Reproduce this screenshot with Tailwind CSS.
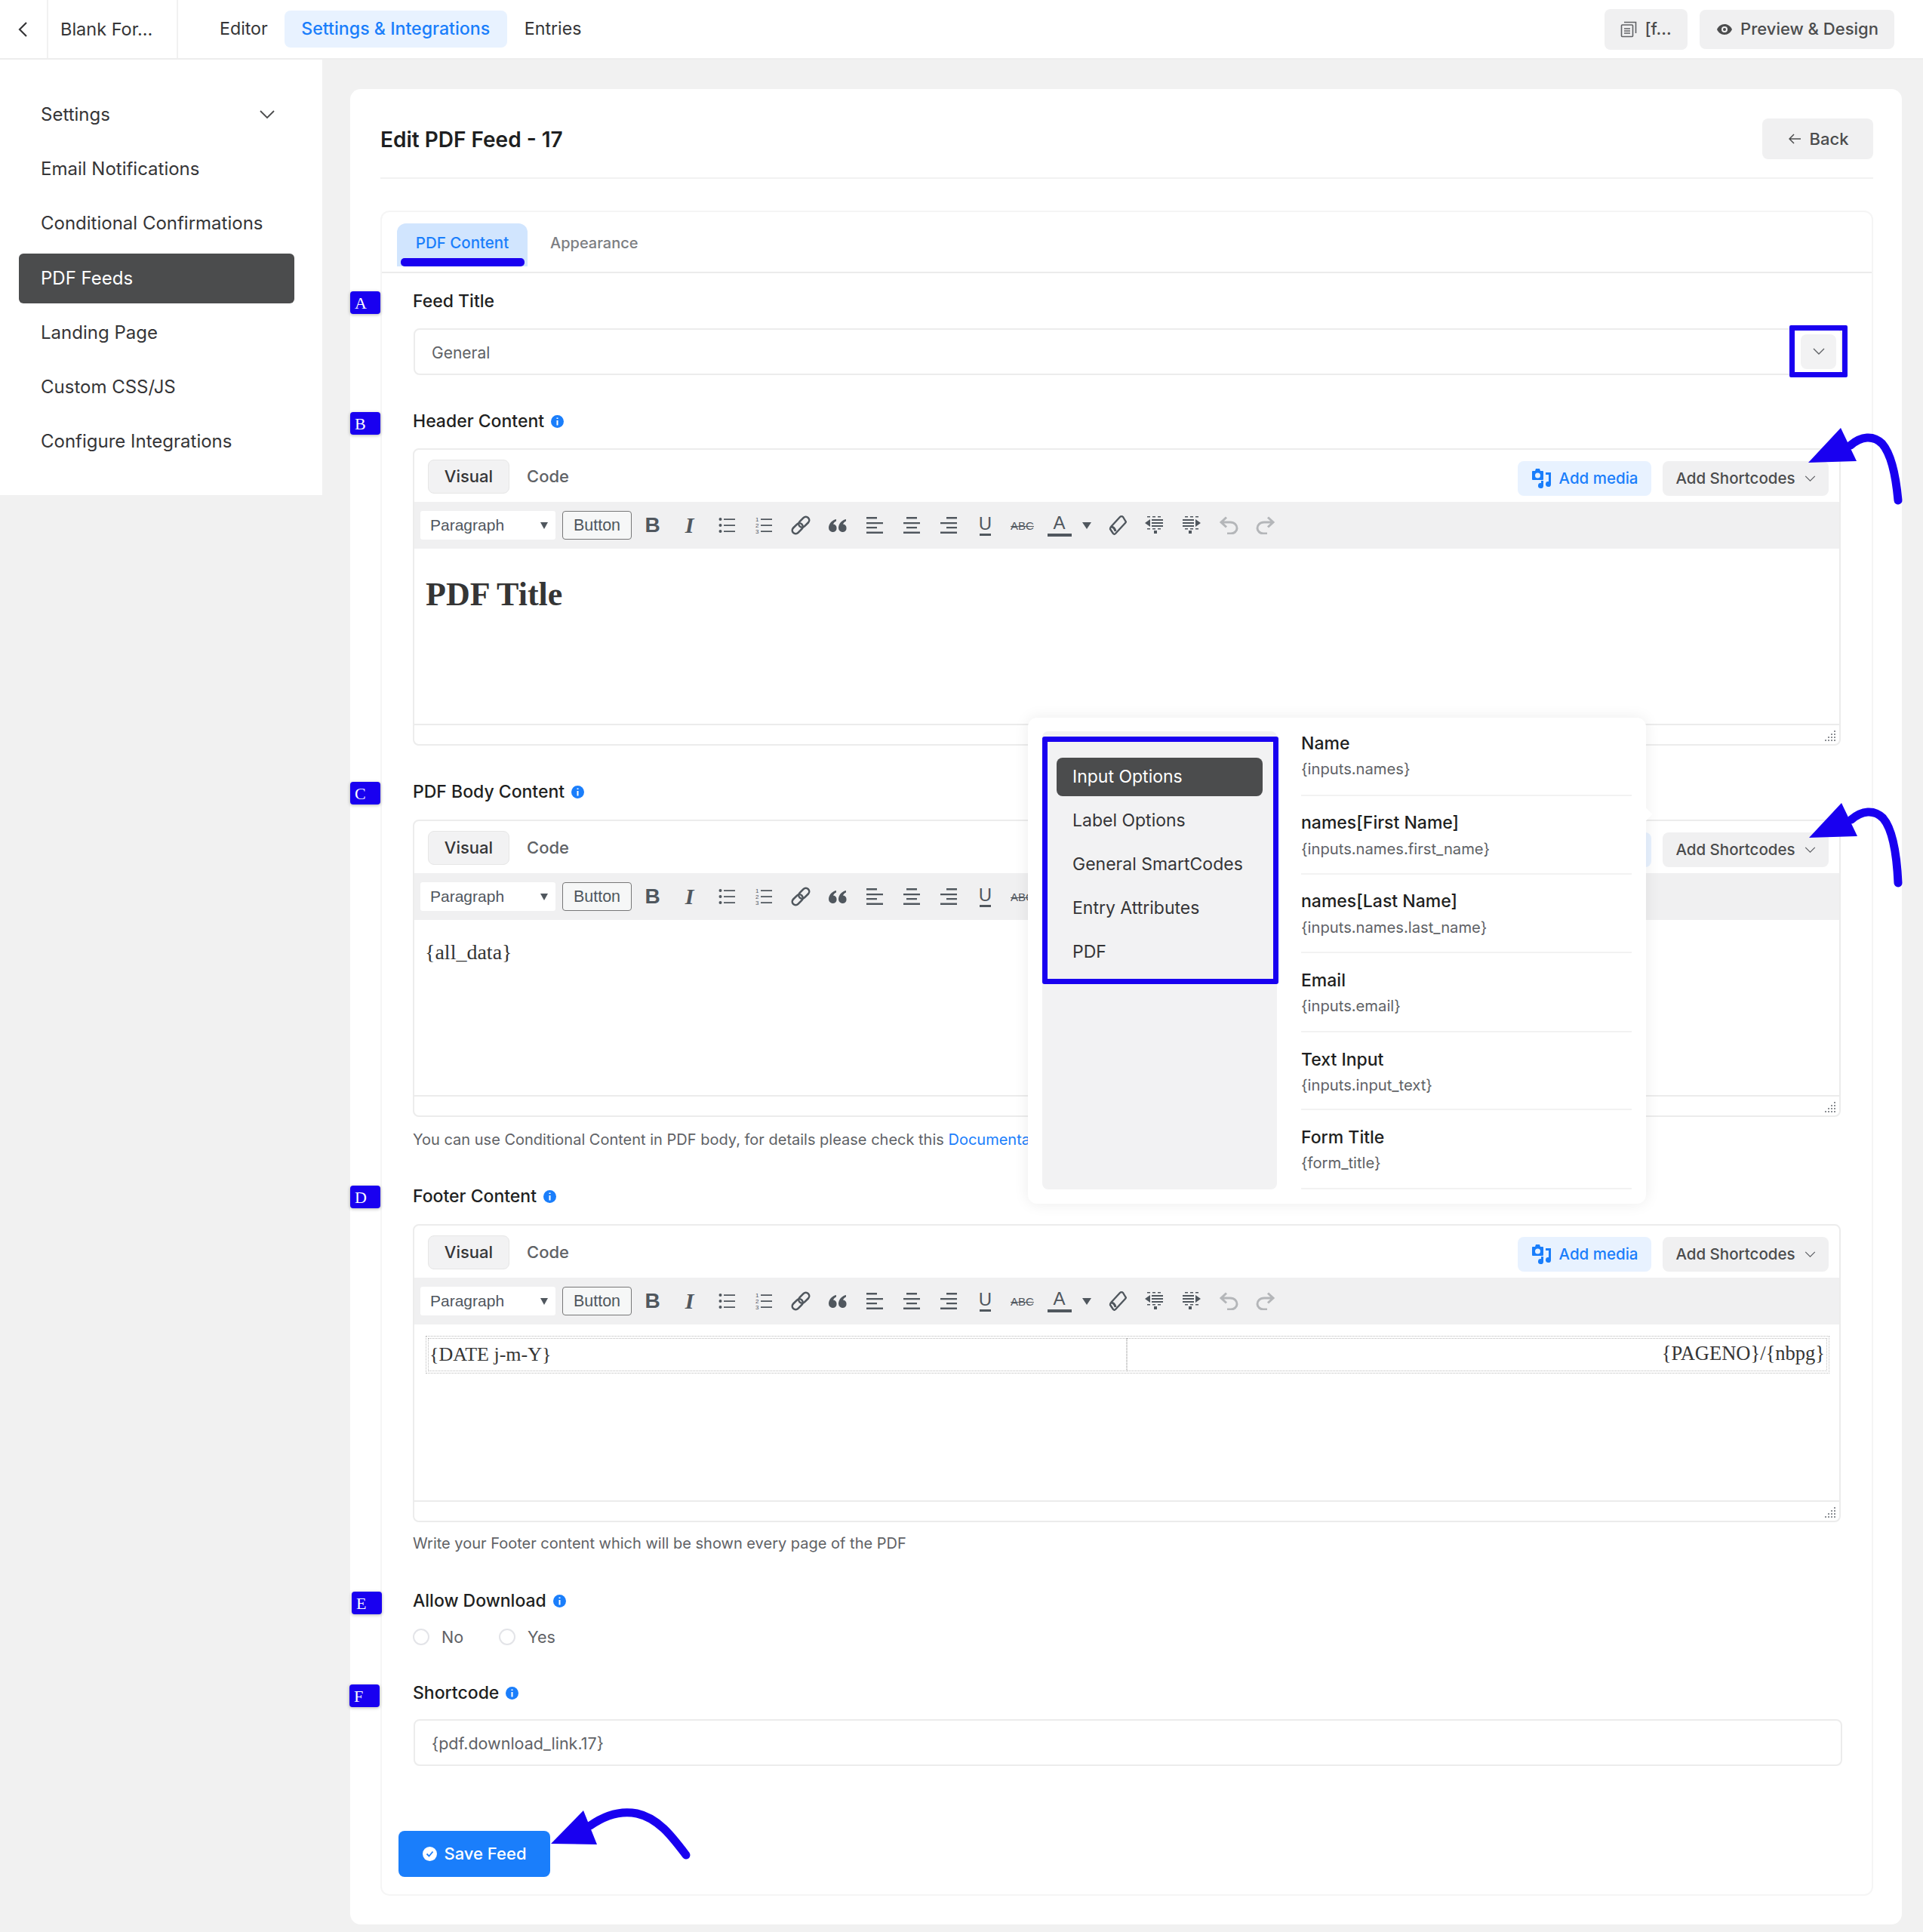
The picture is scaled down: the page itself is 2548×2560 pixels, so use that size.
<!DOCTYPE html>
<html lang="en">
<head>
    <meta charset="UTF-8">
    <title>Edit PDF Feed</title>
    <script src="https://cdn.jsdelivr.net/npm/@tailwindcss/browser@4"></script>
</head>
<body class="bg-[#f1f1f1] font-[Inter,sans-serif] text-[#1e1f21]">
<div class="relative w-[2548px] h-[2560px] overflow-hidden">

    <!-- top bar -->
    <header class="h-[79px] bg-white border-b-2 border-[#ededed] flex items-center text-[23.2px] text-[#353537]">
        <div class="w-[64px] h-full border-r-2 border-[#f1f1f1] flex items-center justify-center">
            <svg class="w-[24px] h-[24px]" viewBox="0 0 24 24" fill="none" stroke="#353537" stroke-width="2.2"><path d="M16 3 7 12l9 9"/></svg>
        </div>
        <div class="w-[172px] h-full border-r-2 border-[#f1f1f1] flex items-center pl-[16px] text-[23.5px]">Blank For...</div>
        <nav class="flex items-center ml-[2px]">
            <a class="pl-[53px] pr-[22px]">Editor</a>
            <a class="w-[295px] h-[49px] rounded-lg bg-[#e8f2ff] text-[#1a7efb] font-medium flex items-center justify-center">Settings &amp; Integrations</a>
            <a class="pl-[23px]">Entries</a>
        </nav>
        <div class="ml-auto mr-[38px] flex items-center gap-[16px] text-[22px] text-[#4b4c4d] font-medium">
            <button class="w-[110px] h-[54px] rounded-lg bg-[#f0f0f1] flex items-center justify-center gap-[10px]">
                <svg class="w-[22px] h-[22px]" viewBox="0 0 22 22" fill="none" stroke="#606266" stroke-width="1.6"><rect x="1.5" y="5" width="15" height="15.5" rx="1"/><path d="M5 1.5h15.5V16M5 10h8M5 13h8M5 16h8"/></svg>
                [f...
            </button>
            <button class="w-[258px] h-[52px] rounded-lg bg-[#f0f0f1] flex items-center justify-center gap-[11px] pl-[2px]">
                <svg class="w-[20px] h-[14px]" viewBox="0 0 20 14"><path fill-rule="evenodd" fill="#4b4c4d" d="M10 0c4.500 0 8.300 3 10 7-1.700 4-5.500 7-10 7S1.700 11 0 7c1.700-4 5.500-7 10-7Zm0 3a4 4 0 1 0 0 8 4 4 0 0 0 0-8Zm0 2a2 2 0 1 1 0 4 2 2 0 0 1 0-4Z"/></svg>
                Preview &amp; Design
            </button>
        </div>
    </header>

    <div class="flex items-start">
        <!-- sidebar -->
        <aside class="w-[427px] h-[577px] bg-white pt-[40px] pl-[25px] pr-[37px] flex flex-col gap-[6.2px] text-[24px] text-[#353537]">
            <a class="h-[66px] pl-[29px] pr-[26px] flex items-center justify-between">Settings
                <svg class="w-[20px] h-[12px]" viewBox="0 0 20 12" fill="none" stroke="#4b4c4d" stroke-width="1.8"><path d="m1 1 9 9 9-9"/></svg>
            </a>
            <a class="h-[66px] pl-[29px] flex items-center">Email Notifications</a>
            <a class="h-[66px] pl-[29px] flex items-center">Conditional Confirmations</a>
            <a class="h-[66px] pl-[29px] flex items-center rounded-md bg-[#4b4c4d] text-white">PDF Feeds</a>
            <a class="h-[66px] pl-[29px] flex items-center">Landing Page</a>
            <a class="h-[66px] pl-[29px] flex items-center">Custom CSS/JS</a>
            <a class="h-[66px] pl-[29px] flex items-center">Configure Integrations</a>
        </aside>

        <main class="ml-[37px] mt-[39px] w-[2056px] h-[2432px] bg-white rounded-[14px] pl-[40px] pr-[38px]">
            <div class="h-[119px] border-b-2 border-[#f2f2f2] flex items-start justify-between">
                <h1 class="mt-[49px] text-[28px] leading-[36px] font-semibold">Edit PDF Feed - 17</h1>
                <button class="mt-[39px] w-[147px] h-[54px] rounded-lg bg-[#f0f0f1] text-[#4b4c4d] text-[22px] font-medium flex items-center justify-center gap-[12px] pl-[2px]">
                    <svg class="w-[16px] h-[14px]" viewBox="0 0 16 14" fill="none" stroke="#4b4c4d" stroke-width="1.5"><path d="M16 7H1M7 1 1 7l6 6"/></svg>
                    Back
                </button>
            </div>

            <section class="mt-[42px] h-[2233px] border-2 border-[#f5f5f5] rounded-[12px]">
                <div class="h-[81px] border-b-2 border-[#ececec] flex pl-[20px] text-[20.5px] font-medium">
                    <div class="relative mt-[15px] w-[173px] h-[57px] rounded-t-xl bg-[#d1e5fe] text-[#1a7efb] flex items-start pt-[11px] justify-center">PDF Content
                        <span class="absolute left-[5px] top-[46px] w-[164px] h-[11px] rounded-[5px] bg-[#1900f0]"></span>
                    </div>
                    <div class="mt-[26px] ml-[30px] text-[20px] text-[#7c7e82]">Appearance</div>
                </div>

                <div class="pl-[41px] pr-[41px] text-[23px] font-medium">
                    <label class="mt-[20px] h-[34px] flex items-center">Feed Title</label>
                    <div class="mt-[19px] ml-[1px] w-[1893px] h-[62px] rounded-lg border-2 border-[#ececec] flex items-center pl-[22px] pt-[3px] text-[21px] font-normal text-[#606266]">General</div>

                    <label class="mt-[44px] h-[34px] flex items-center gap-[9px]">Header Content
                        <svg class="w-[17px] h-[17px]" viewBox="0 0 17 17"><circle cx="8.500" cy="8.500" r="8.500" fill="#1a7efb"/><path d="M8.500 3.500v1.500M8.500 7v6.500" stroke="#fff" stroke-width="2"/></svg>
                    </label>
                    <div class="mt-[19px] h-[394px]" data-editor>
                        <div class="h-[234px] px-[15px] pt-[33px] font-['Liberation_Serif',serif] font-bold text-[44px] leading-[56px] text-[#353535]">PDF Title</div>
                    </div>

                    <label class="mt-[44px] h-[34px] flex items-center gap-[9px]">PDF Body Content
                        <svg class="w-[17px] h-[17px]" viewBox="0 0 17 17"><circle cx="8.500" cy="8.500" r="8.500" fill="#1a7efb"/><path d="M8.500 3.500v1.500M8.500 7v6.500" stroke="#fff" stroke-width="2"/></svg>
                    </label>
                    <div class="mt-[20px] h-[394px]" data-editor>
                        <div class="h-[234px] px-[14px] pt-[25px] font-['Liberation_Serif',serif] font-normal text-[28px] leading-[36px] text-[#353535]">{all_data}</div>
                    </div>
                    <p class="mt-[15px] h-[30px] text-[20px] leading-[30px] font-normal text-[#606266]">You can use Conditional Content in PDF body, for details please check this <a class="text-[#1a7efb]">Documentation</a></p>

                    <label class="mt-[43px] h-[34px] flex items-center gap-[9px]">Footer Content
                        <svg class="w-[17px] h-[17px]" viewBox="0 0 17 17"><circle cx="8.500" cy="8.500" r="8.500" fill="#1a7efb"/><path d="M8.500 3.500v1.500M8.500 7v6.500" stroke="#fff" stroke-width="2"/></svg>
                    </label>
                    <div class="mt-[20px] h-[395px]" data-editor>
                        <div class="h-[235px] pl-[15px] pr-[13px] pt-[15px] font-['Liberation_Serif',serif] font-normal text-[26.5px] text-[#353535]">
                            <div class="h-[50px] border border-dotted border-[#bbb] p-[2px] flex">
                                <div class="w-[926px] border border-dotted border-[#bbb] pl-[1px] pb-[2px] flex items-center text-[26px]">{DATE j-m-Y}</div>
                                <div class="flex-1 border border-dotted border-[#bbb] pr-[2px] pb-[2px] flex items-center justify-end">{PAGENO}/{nbpg}</div>
                            </div>
                        </div>
                    </div>
                    <p class="mt-[13px] h-[30px] text-[20px] leading-[30px] font-normal text-[#606266]">Write your Footer content which will be shown every page of the PDF</p>

                    <label class="mt-[44px] h-[34px] flex items-center gap-[9px]">Allow Download
                        <svg class="w-[17px] h-[17px]" viewBox="0 0 17 17"><circle cx="8.500" cy="8.500" r="8.500" fill="#1a7efb"/><path d="M8.500 3.500v1.500M8.500 7v6.500" stroke="#fff" stroke-width="2"/></svg>
                    </label>
                    <div class="mt-[16px] h-[30px] flex items-center text-[21.5px] font-normal text-[#606266]">
                        <span class="w-[22px] h-[22px] rounded-full border-2 border-[#e3e4e8]"></span>
                        <span class="ml-[16px]">No</span>
                        <span class="ml-[47px] w-[22px] h-[22px] rounded-full border-2 border-[#e3e4e8]"></span>
                        <span class="ml-[16px]">Yes</span>
                    </div>

                    <label class="mt-[42px] h-[34px] flex items-center gap-[9px]">Shortcode
                        <svg class="w-[17px] h-[17px]" viewBox="0 0 17 17"><circle cx="8.500" cy="8.500" r="8.500" fill="#1a7efb"/><path d="M8.500 3.500v1.500M8.500 7v6.500" stroke="#fff" stroke-width="2"/></svg>
                    </label>
                    <div class="mt-[18px] ml-[1px] w-[1893px] h-[62px] rounded-lg border-2 border-[#ececec] flex items-center pl-[22px] pt-[3px] text-[21.5px] font-normal text-[#606266]">{pdf.download_link.17}</div>

                    <button class="mt-[86px] -ml-[19px] w-[201px] h-[61px] rounded-lg bg-[#1a7efb] text-white text-[22px] font-medium flex items-center justify-center gap-[10px]">
                        <svg class="w-[19px] h-[19px]" viewBox="0 0 19 19"><circle cx="9.500" cy="9.500" r="9.500" fill="#fff"/><path d="m5.500 9.500 3 3 5-6" fill="none" stroke="#1a7efb" stroke-width="1.800"/></svg>
                        Save Feed
                    </button>
                </div>
            </section>
        </main>
    </div>

    <!-- shortcode popover -->
    <div class="absolute left-[1362px] top-[951px] w-[819px] h-[644px] bg-white rounded-xl shadow-[0_0_20px_rgba(0,0,0,0.08)] flex">
        <span class="absolute -right-[6px] top-[122px] w-[12px] h-[12px] rotate-45 bg-white"></span>
        <div class="ml-[19px] mt-[18px] w-[311px] h-[607px] rounded-lg bg-[#f2f2f3] pt-[35px] px-[19px] text-[23px] text-[#353537]">
            <div class="h-[51px] rounded-lg bg-[#4b4c4d] text-white flex items-center pl-[21px]">Input Options</div>
            <div class="h-[58px] mt-[3px] flex items-center pl-[21px]">Label Options</div>
            <div class="h-[58px] flex items-center pl-[21px]">General SmartCodes</div>
            <div class="h-[58px] flex items-center pl-[21px]">Entry Attributes</div>
            <div class="h-[58px] flex items-center pl-[21px]">PDF</div>
        </div>
        <div class="ml-[32px] w-[438px] text-[23px]">
            <div class="h-[104px] pt-[16px] border-b-2 border-[#f2f2f2]"><div class="h-[36px] leading-[36px] font-medium">Name</div><div class="text-[20.2px] leading-[30px] mt-[1px] text-[#606266]">{inputs.names}</div></div>
            <div class="h-[104px] pt-[17px] border-b-2 border-[#f2f2f2]"><div class="h-[36px] leading-[36px] font-medium">names[First Name]</div><div class="text-[20.2px] leading-[30px] mt-[2px] text-[#606266]">{inputs.names.first_name}</div></div>
            <div class="h-[104px] pt-[17px] border-b-2 border-[#f2f2f2]"><div class="h-[36px] leading-[36px] font-medium">names[Last Name]</div><div class="text-[20.2px] leading-[30px] mt-[2px] text-[#606266]">{inputs.names.last_name}</div></div>
            <div class="h-[105px] pt-[18px] border-b-2 border-[#f2f2f2]"><div class="h-[36px] leading-[36px] font-medium">Email</div><div class="text-[20.2px] leading-[30px] mt-[1px] text-[#606266]">{inputs.email}</div></div>
            <div class="h-[103px] pt-[18px] border-b-2 border-[#f2f2f2]"><div class="h-[36px] leading-[36px] font-medium">Text Input</div><div class="text-[20.2px] leading-[30px] mt-[1px] text-[#606266]">{inputs.input_text}</div></div>
            <div class="h-[105px] pt-[18px] border-b-2 border-[#f2f2f2]"><div class="h-[36px] leading-[36px] font-medium">Form Title</div><div class="text-[20.2px] leading-[30px] mt-[1px] text-[#606266]">{form_title}</div></div>
        </div>
    </div>

    <!-- blue annotations drawn over the screenshot -->
    <div class="absolute left-[1381px] top-[976px] w-[313px] h-[328px] border-[7px] border-[#1900f0] rounded-[3px]"></div>
    <div class="absolute left-[2371px] top-[431px] w-[77px] h-[69px] border-[7px] border-[#1900f0] rounded-[2px] flex items-center justify-center">
        <div class="w-[47px] h-[46px] rounded-lg bg-[#f2f2f3] flex items-center justify-center">
            <svg class="w-[16px] h-[10px]" viewBox="0 0 16 10" fill="none" stroke="#606266" stroke-width="1.400"><path d="m1 1 7 7 7-7"/></svg>
        </div>
    </div>
    <span class="absolute left-[464px] top-[386px] w-[40px] h-[30px] rounded-[4px] bg-[#1900f0] shadow-[0_1px_4px_rgba(0,0,0,0.3)] text-white text-[22px] leading-[31px] pl-[6px] font-['Liberation_Serif',serif]">A</span>
    <span class="absolute left-[464px] top-[546px] w-[40px] h-[30px] rounded-[4px] bg-[#1900f0] shadow-[0_1px_4px_rgba(0,0,0,0.3)] text-white text-[22px] leading-[31px] pl-[6px] font-['Liberation_Serif',serif]">B</span>
    <span class="absolute left-[464px] top-[1036px] w-[40px] h-[30px] rounded-[4px] bg-[#1900f0] shadow-[0_1px_4px_rgba(0,0,0,0.3)] text-white text-[22px] leading-[31px] pl-[6px] font-['Liberation_Serif',serif]">C</span>
    <span class="absolute left-[464px] top-[1571px] w-[40px] h-[30px] rounded-[4px] bg-[#1900f0] shadow-[0_1px_4px_rgba(0,0,0,0.3)] text-white text-[22px] leading-[31px] pl-[6px] font-['Liberation_Serif',serif]">D</span>
    <span class="absolute left-[466px] top-[2109px] w-[40px] h-[30px] rounded-[4px] bg-[#1900f0] shadow-[0_1px_4px_rgba(0,0,0,0.3)] text-white text-[22px] leading-[31px] pl-[6px] font-['Liberation_Serif',serif]">E</span>
    <span class="absolute left-[463px] top-[2232px] w-[40px] h-[30px] rounded-[4px] bg-[#1900f0] shadow-[0_1px_4px_rgba(0,0,0,0.3)] text-white text-[22px] leading-[31px] pl-[6px] font-['Liberation_Serif',serif]">F</span>

    <svg class="absolute left-0 top-0 pointer-events-none" width="2548" height="2560" viewBox="0 0 2548 2560">
        <g fill="none" stroke="#1900f0" stroke-width="11" stroke-linecap="round">
            <path d="M2452 590c14-12 30-14 42-2 12 14 18 42 21 75"/>
            <path d="M2453 1086c14-12 30-14 42-2 12 14 18 42 20 86"/>
            <path d="M782 2419c20-14 42-20 62-16 28 6 46 30 65 55"/>
        </g>
        <g fill="#1900f0">
            <path d="m2439 567-43 46 64-2Z"/>
            <path d="m2440 1064-43 46 64-2Z"/>
            <path d="m773 2399-43 44 61 1Z"/>
        </g>
    </svg>
</div>

<template id="editorChrome">
    <div class="h-full border-2 border-[#ececec] rounded-lg flex flex-col font-normal overflow-hidden">
        <div class="h-[69px] shrink-0 flex items-start pt-[13px] pl-[18px] pr-[14px]">
            <div class="w-[108px] h-[45px] rounded-lg bg-[#f2f2f3] border border-[#e6e6e6] flex items-center justify-center text-[22px] font-medium text-[#353537]">Visual</div>
            <div class="ml-[23px] h-[45px] flex items-center text-[22px] font-medium text-[#606266]">Code</div>
            <button class="ml-auto mt-[2px] w-[177px] h-[46px] rounded-lg bg-[#e8f2ff] text-[#1a7efb] text-[20.5px] font-medium flex items-center justify-center gap-[10px]">
                <svg class="w-[27px] h-[26px]" viewBox="0 0 27 26" fill="#1a7efb"><path fill-rule="evenodd" d="M2 3h3l1-3h5l1 3h3a1 1 0 0 1 1 1v10a1 1 0 0 1-1 1H2a1 1 0 0 1-1-1V4a1 1 0 0 1 1-1Zm6.500 2.500a3.500 3.500 0 1 0 0 7 3.500 3.500 0 0 0 0-7Z"/><path d="M19 5h7v15.500a3.500 3.500 0 1 1-3-3.400V8h-4ZM13 16h3v6.500a3.500 3.500 0 1 1-3-3.400Z"/></svg>
                Add media
            </button>
            <button class="ml-[15px] mt-[2px] w-[220px] h-[46px] rounded-lg bg-[#f0f0f1] text-[#4b4c4d] text-[20.5px] font-medium flex items-center justify-center gap-[12px]">
                Add Shortcodes
                <svg class="w-[15px] h-[9px]" viewBox="0 0 16 10" fill="none" stroke="#606266" stroke-width="1.400"><path d="m1 1 7 7 7-7"/></svg>
            </button>
        </div>
        <div class="h-[62px] shrink-0 bg-[#f0f0f1] flex items-center pl-[8px] text-[#50575e]">
            <div class="w-[179px] h-[38px] bg-white rounded-[3px] flex items-center justify-between pl-[13px] pr-[10px] text-[21px] font-['Liberation_Sans',sans-serif]">Paragraph <span class="w-0 h-0 border-x-[5px] border-x-transparent border-t-[9px] border-t-[#50575e]"></span></div>
            <div class="ml-[9px] w-[92px] h-[38px] bg-[#f6f7f7] border border-[#777] rounded-[4px] flex items-center justify-center text-[21.5px] font-['Liberation_Sans',sans-serif]">Button</div>
            <div class="ml-[3px] flex items-center">
                <span class="w-[49px] text-center text-[28px] font-bold font-['Liberation_Sans',sans-serif] leading-none">B</span>
                <span class="w-[49px] text-center text-[30px] italic font-bold font-['Liberation_Serif',serif] leading-none">I</span>
                <span class="w-[49px] flex justify-center"><svg class="w-[22px] h-[20px]" viewBox="0 0 22 20" fill="#50575e"><circle cx="2.500" cy="2" r="2"/><circle cx="2.500" cy="10" r="2"/><circle cx="2.500" cy="18" r="2"/><path d="M7 1.200h15v1.700H7zM7 9.200h15v1.700H7zM7 17.200h15v1.700H7z"/></svg></span>
                <span class="w-[49px] flex justify-center"><svg class="w-[22px] h-[26px]" viewBox="0 0 22 26" fill="#50575e"><path d="M7 4.200h15v1.700H7zM7 12.200h15v1.700H7zM7 20.200h15v1.700H7z"/><text x="0" y="8" font-size="8" font-family="Liberation Sans">1</text><text x="0" y="16" font-size="8" font-family="Liberation Sans">2</text><text x="0" y="24" font-size="8" font-family="Liberation Sans">3</text></svg></span>
                <span class="w-[49px] flex justify-center"><svg class="w-[28px] h-[28px]" viewBox="0 0 28 28" fill="none" stroke="#50575e" stroke-width="2.600"><g transform="rotate(-45 14 14)"><rect x="0" y="9.500" width="16" height="9" rx="4.500"/><rect x="12" y="9.500" width="16" height="9" rx="4.500"/></g></svg></span>
                <span class="w-[49px] flex justify-center"><svg class="w-[24px] h-[17px]" viewBox="0 0 24 17" fill="#50575e"><path d="M6 17a5.500 5.500 0 0 1-6-5.500C0 6 4.500 1 10 0v2.500C8 3.500 6.500 5 6 6.500a5.300 5.300 0 0 1 0 10.500Z"/><path d="M19 17a5.500 5.500 0 0 1-6-5.500C13 6 17.500 1 23 0v2.500c-2 1-3.500 2.500-4 4a5.300 5.300 0 0 1 0 10.500Z"/></svg></span>
                <span class="w-[49px] flex justify-center"><svg class="w-[22px] h-[22px]" viewBox="0 0 22 22" fill="#50575e"><path d="M0 0h14v2.500H0zM0 7h22v2.200H0zM0 13h14v2.200H0zM0 19.500h22V22H0z"/></svg></span>
                <span class="w-[49px] flex justify-center"><svg class="w-[22px] h-[22px]" viewBox="0 0 22 22" fill="#50575e"><path d="M4 0h14v2.500H4zM0 7h22v2.200H0zM4 13h14v2.200H4zM0 19.500h22V22H0z"/></svg></span>
                <span class="w-[49px] flex justify-center"><svg class="w-[22px] h-[22px]" viewBox="0 0 22 22" fill="#50575e"><path d="M8 0h14v2.500H8zM0 7h22v2.200H0zM8 13h14v2.200H8zM0 19.500h22V22H0z"/></svg></span>
                <span class="w-[49px] flex flex-col items-center leading-none"><span class="text-[24px] font-['Liberation_Sans',sans-serif]">U</span><span class="mt-[1px] w-[15px] h-[3px] bg-[#50575e]"></span></span>
                <span class="w-[49px] text-center text-[15px] line-through font-['Liberation_Sans',sans-serif] leading-none">ABC</span>
                <span class="w-[49px] flex flex-col items-center leading-none"><span class="text-[24px] font-['Liberation_Sans',sans-serif]">A</span><span class="mt-[2px] w-[32px] h-[4px] bg-[#50575e]"></span></span>
                <span class="w-[24px] flex justify-center"><span class="w-0 h-0 border-x-[6px] border-x-transparent border-t-[9px] border-t-[#50575e]"></span></span>
                <span class="ml-[4px] w-[49px] flex justify-center"><svg class="w-[24px] h-[26px]" viewBox="0 0 24 26" fill="none" stroke="#50575e" stroke-width="2.400" stroke-linejoin="round"><path d="M15 2 3 15c-1 1-1 2-1 3l4 6c1 1 2 1 3 0L22 10c1-1 1-2 0-3l-3-5c-1-1-3-1-4 0Z"/><path d="M3 15c3 0 5 2 6 6" stroke-width="3"/></svg></span>
                <span class="w-[49px] flex justify-center"><svg class="w-[25px] h-[24px]" viewBox="0 0 25 24" fill="#50575e"><path d="M3 0h4v1.500H3zM10 0h4v1.500h-4zM17 0h4v1.500h-4zM9 4h15v2H9zM9 8h15v2H9zM9 12h15v2H9zM3 16h4v1.500H3zM10 16h4v1.500h-4zM17 16h4v1.500h-4zM12 19h4v4h-4zM0 9l7-5v10z"/></svg></span>
                <span class="w-[49px] flex justify-center"><svg class="w-[25px] h-[24px]" viewBox="0 0 25 24" fill="#50575e"><path d="M4 0h4v1.500H4zM11 0h4v1.500h-4zM18 0h4v1.500h-4zM1 4h15v2H1zM1 8h15v2H1zM1 12h15v2H1zM4 16h4v1.500H4zM11 16h4v1.500h-4zM18 16h4v1.500h-4zM9 19h4v4H9zM25 9l-7-5v10z"/></svg></span>
                <span class="w-[49px] flex justify-center"><svg class="w-[26px] h-[24px]" viewBox="0 0 26 24" fill="none" stroke="#b4b6b9" stroke-width="3"><path d="M3 8h12c6 0 9 4 9 8s-4 7-8 7h-5M10 1.500 3 8l7 6.500"/></svg></span>
                <span class="w-[49px] flex justify-center"><svg class="w-[26px] h-[24px]" viewBox="0 0 26 24" fill="none" stroke="#b4b6b9" stroke-width="3"><path d="M23 8H11C5 8 2 12 2 16s4 7 8 7h5M16 1.500 23 8l-7 6.500"/></svg></span>
            </div>
        </div>
        <div data-slot class="flex-1"></div>
        <div class="h-[27px] shrink-0 border-t-2 border-[#ececec] flex items-end justify-end pr-[5px] pb-[4px]">
            <svg class="w-[14px] h-[14px]" viewBox="0 0 14 14" fill="#8c8f94"><path d="M12 0h2v2h-2zM8 4h2v2H8zM12 4h2v2h-2zM4 8h2v2H4zM8 8h2v2H8zM12 8h2v2h-2zM0 12h2v2H0zM4 12h2v2H4zM8 12h2v2H8zM12 12h2v2h-2z"/></svg>
        </div>
    </div>
</template>

<script>
    // Same editor frame three times, only the content differs
    const chrome = document.getElementById('editorChrome');
    document.querySelectorAll('[data-editor]').forEach(el => {
        const content = el.firstElementChild;
        const frame = chrome.content.cloneNode(true);
        frame.querySelector('[data-slot]').replaceWith(content);
        el.appendChild(frame);
    });
</script>
</body>
</html>
